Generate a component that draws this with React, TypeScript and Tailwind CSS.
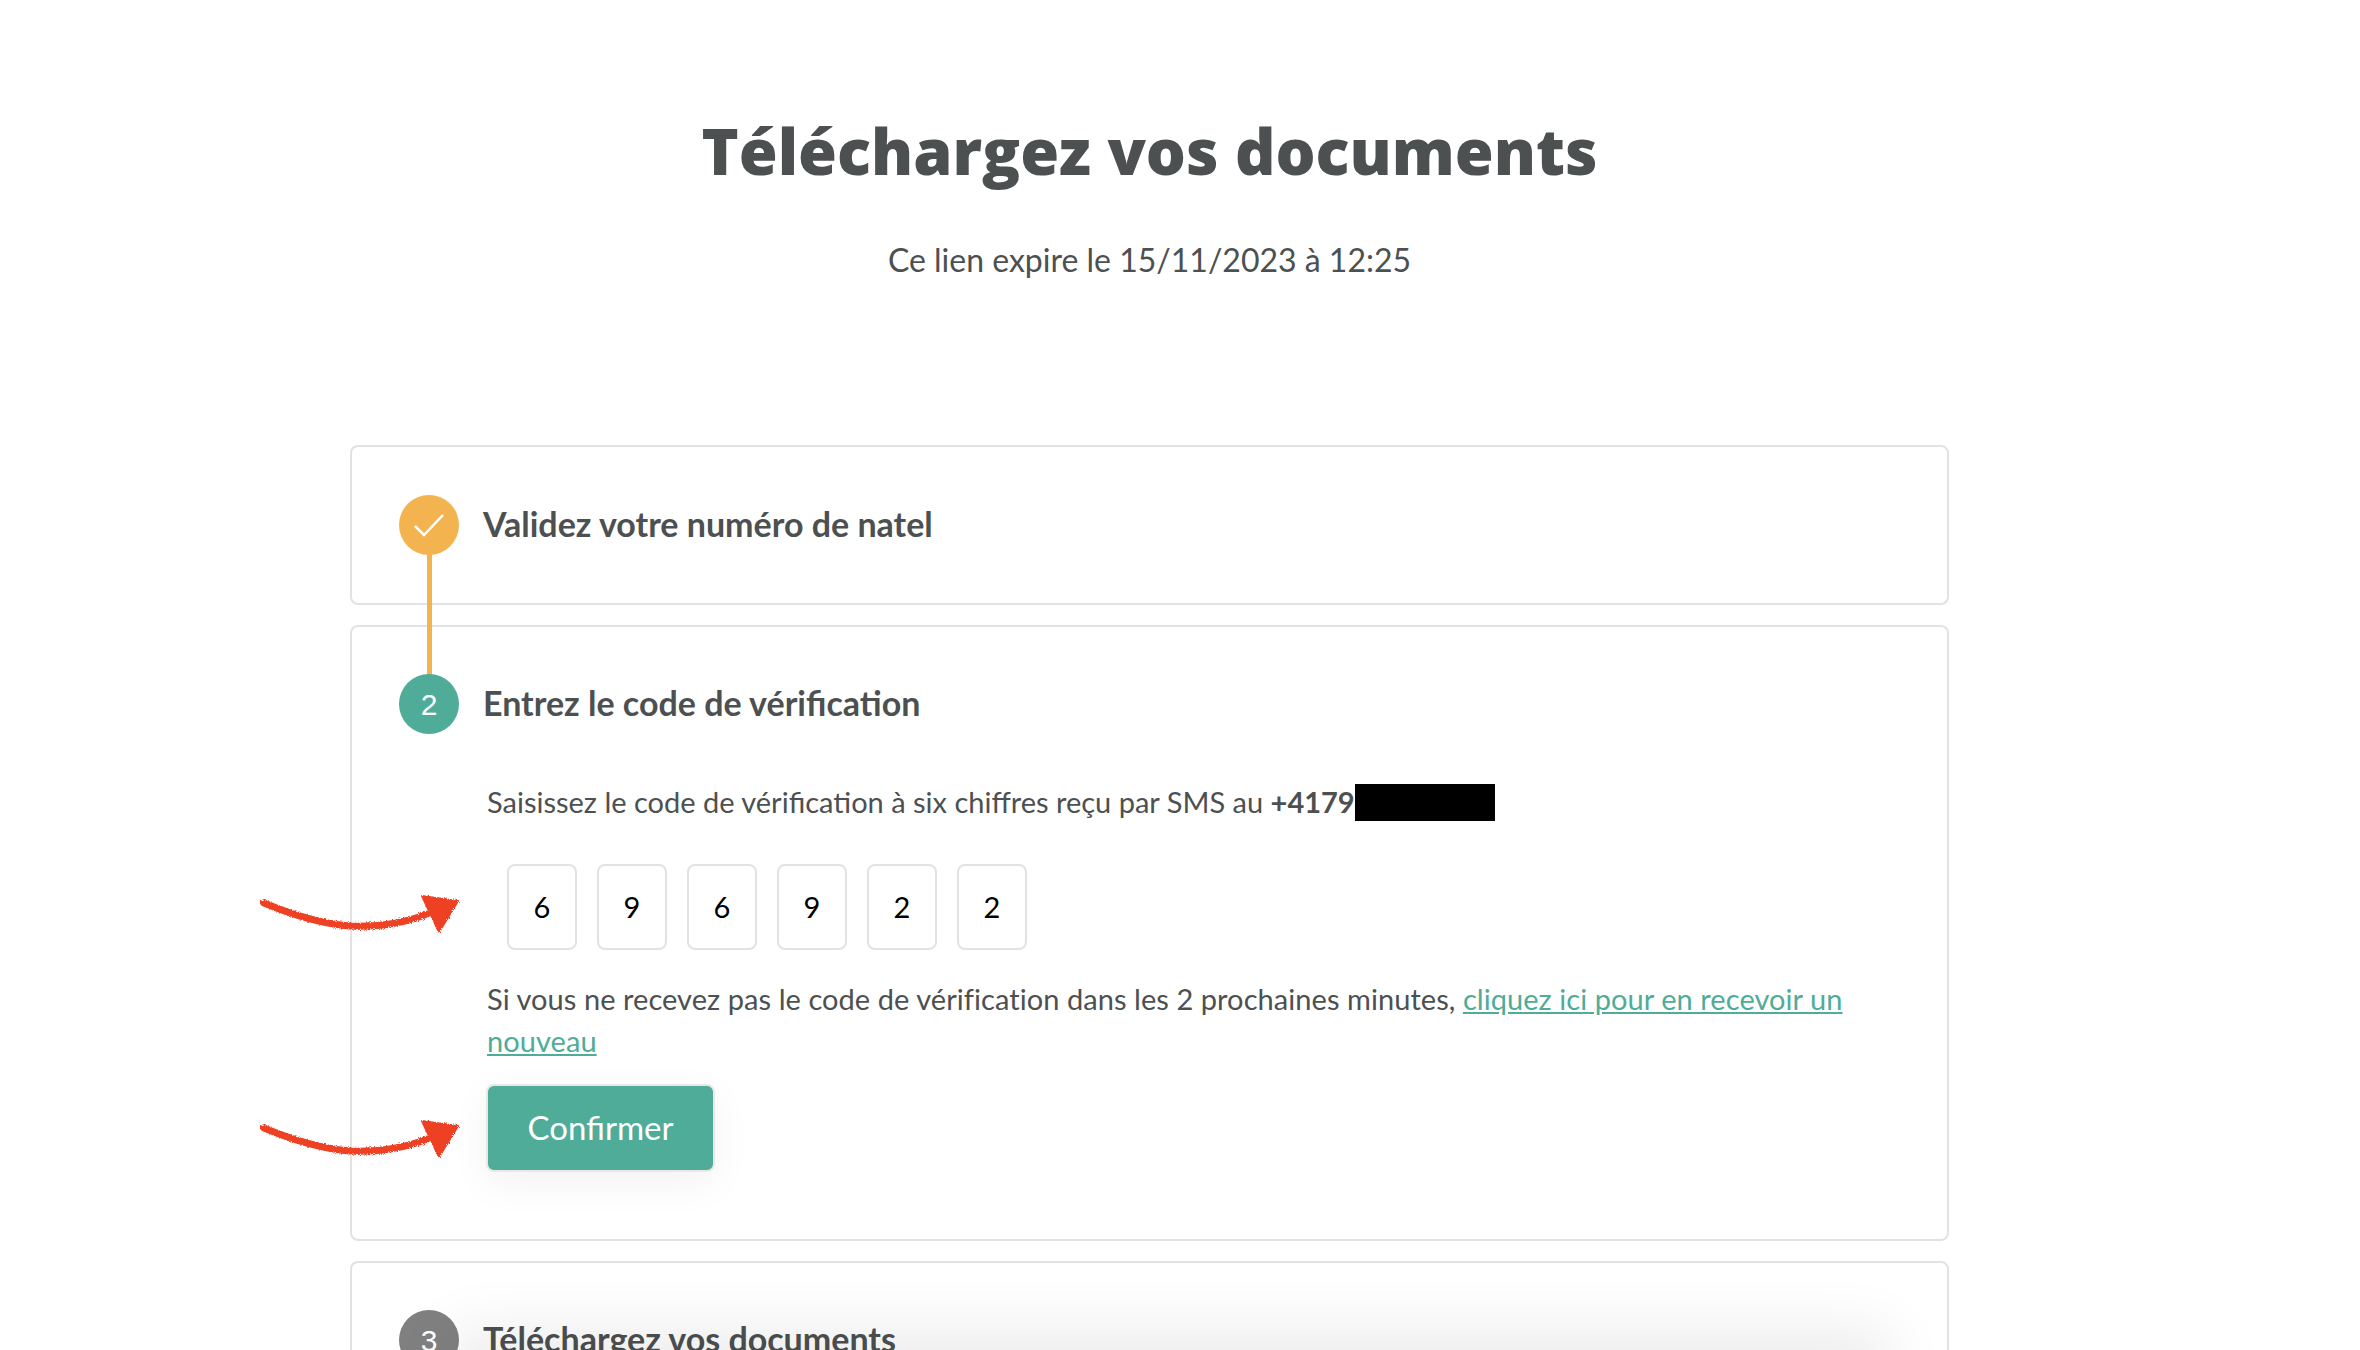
import React from "react";

const digits = ["6", "9", "6", "9", "2", "2"];

const Arrow = ({ className }: { className: string }) => {
    const id = React.useId().replace(/:/g, "");
    return (
        <svg className={className} width="220" height="70" viewBox="0 0 220 70" fill="none">
            <defs>
                <filter id={id} x="-10%" y="-10%" width="120%" height="120%">
                    <feTurbulence type="fractalNoise" baseFrequency="0.9" numOctaves="2" seed="4" />
                    <feDisplacementMap in="SourceGraphic" scale="4" />
                </filter>
            </defs>
            <g filter={`url(#${id})`}>
                <path d="M9 18 C40 31 70 39 95 41 C125 42 150 38 172 29" stroke="#ee3f24" strokeWidth="7" strokeLinecap="round" fill="none" />
                <path d="M167 11 L203 16 L184 47 Z" stroke="#ee3f24" strokeWidth="2" strokeLinejoin="round" fill="#ee3f24" />
            </g>
        </svg>
    );
};

const StepHeader = ({ badge, title, color }: { badge: React.ReactNode; title: string; color: string }) => (
    <div className="flex items-center">
        <div className={`flex h-[60px] w-[60px] shrink-0 items-center justify-center rounded-full text-[30px] text-white font-['Liberation_Sans',sans-serif] ${color}`}>
            {badge}
        </div>
        <h2 className="ml-[24px] text-[34px] font-bold leading-[40px] text-[#4d5051] -translate-y-[1px]">{title}</h2>
    </div>
);

export default function App() {
    return (
        <div className="relative h-[1350px] overflow-hidden bg-white font-['Lato',sans-serif] text-[#4d5051]">
            <div className="ml-[350px] w-[1599px] pt-[106px]">
                <h1 className="text-center font-['Open_Sans',sans-serif] text-[63px] font-extrabold leading-[90px] text-[#4d5051]">
                    Téléchargez vos documents
                </h1>
                <p className="mt-[41px] text-center text-[32px] leading-[46px]">Ce lien expire le 15/11/2023 à 12:25</p>

                <div className="relative mt-[162px] flex flex-col gap-[20px]">
                    <div className="absolute left-[77px] top-[100px] h-[140px] w-[5px] bg-[#f3b44f]" />

                    <section className="h-[160px] rounded-[8px] border-2 border-[#e2e2e2] px-[47px] pt-[48px]">
                        <StepHeader
                            color="relative bg-[#f3b44f]"
                            title="Validez votre numéro de natel"
                            badge={
                                <svg width="30" height="23" viewBox="0 0 30 23" fill="none">
                                    <path d="M1 12 L10 21 L29 1" stroke="white" strokeWidth="2.5" />
                                </svg>
                            }
                        />
                    </section>

                    <section className="h-[616px] rounded-[8px] border-2 border-[#e2e2e2] pl-[47px] pr-[80px] pt-[47px]">
                        <StepHeader color="relative bg-[#4fac98]" title="Entrez le code de vérification" badge="2" />
                        <div className="ml-[88px]">
                            <p className="mt-[47px] flex items-center text-[29px] leading-[42px]">
                                Saisissez le code de vérification à six chiffres reçu par SMS au&nbsp;
                                <strong className="font-bold">+4179</strong>
                                <span className="h-[37px] w-[140px] bg-black" />
                            </p>
                            <div className="ml-[20px] mt-[41px] flex gap-[20px]">
                                {digits.map((digit, i) => (
                                    <div key={i} className="flex h-[86px] w-[70px] items-center justify-center rounded-[8px] border-2 border-[#e2e2e2] text-[29px] text-black">
                                        {digit}
                                    </div>
                                ))}
                            </div>
                            <p className="mt-[28px] text-[29px] leading-[42px] tracking-[0.06px]">
                                Si vous ne recevez pas le code de vérification dans les 2 prochaines minutes,{" "}
                                <a className="text-[#4fac98] underline">cliquez ici pour en recevoir un nouveau</a>
                            </p>
                            <button className="-ml-[1px] mt-[22px] h-[88px] w-[229px] rounded-[8px] border-2 border-[#e8e8e8] bg-[#4fac98] text-[33px] text-white shadow-[0_12px_40px_rgba(0,0,0,0.05)]">
                                Confirmer
                            </button>
                        </div>
                    </section>

                    <section className="h-[200px] rounded-[8px] border-2 border-[#e2e2e2] px-[47px] pt-[47px]">
                        <StepHeader color="bg-[#808080]" title="Téléchargez vos documents" badge="3" />
                    </section>
                </div>
            </div>

            <Arrow className="absolute left-[255px] top-[885px]" />
            <Arrow className="absolute left-[255px] top-[1110px]" />
            <div className="absolute left-[480px] top-[1360px] h-[20px] w-[1380px] shadow-[0_0_60px_30px_rgba(0,0,0,0.08)]" />
        </div>
    );
}
